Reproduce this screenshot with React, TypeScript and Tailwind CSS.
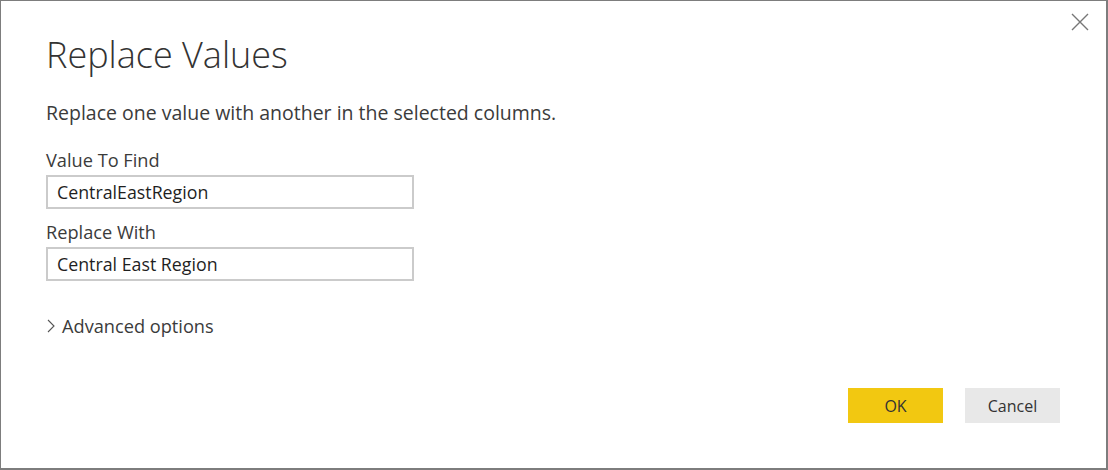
const Field = ({ label, value }: { label: string; value: string }) => {
  return (
    <div className="flex flex-col">
      <label className="text-[18.2px] leading-[24px] text-[#3b3b3b] mb-[3px]">{label}</label>
      <div className="w-[368px] h-[34px] border-2 border-[#cbcbcb] bg-white flex items-center px-[9px] text-[17.8px] text-[#1f1f1f]">
        {value}
      </div>
    </div>
  );
};

const App = () => {
  return (
    <div
      className="w-[1108px] h-[470px] bg-white border-t border-l border-r-2 border-b-2 border-[#7d7d7d] relative flex flex-col"
      style={{ fontFamily: '"Open Sans", "Noto Sans", sans-serif' }}
    >
      <button className="absolute top-[12px] right-[17px] w-[18px] h-[18px] text-[#777]">
        <svg viewBox="0 0 18 18" width="18" height="18" fill="none" stroke="currentColor" strokeWidth="1.4">
          <path d="M1 1 L17 17 M17 1 L1 17" />
        </svg>
      </button>
      <div className="pl-[45px] pt-[30px] flex flex-col">
        <h1 className="text-[36px] font-light leading-[48px] text-[#333]">Replace Values</h1>
        <p className="mt-[21px] text-[19.5px] leading-[26px] text-[#3b3b3b]">
          Replace one value with another in the selected columns.
        </p>
        <div className="mt-[22px] flex flex-col gap-[11px]">
          <Field label="Value To Find" value="CentralEastRegion" />
          <Field label="Replace With" value="Central East Region" />
        </div>
        <div className="mt-[33px] flex items-center gap-[7px] text-[18.2px] leading-[24px] text-[#3b3b3b]">
          <svg width="8" height="14" viewBox="0 0 8 14" fill="none" stroke="#555" strokeWidth="1.1" className="ml-[1px]">
            <path d="M1 1 L7 7 L1 13" />
          </svg>
          <span>Advanced options</span>
        </div>
      </div>
      <div className="mt-auto mb-[45px] flex justify-end gap-[22px] pr-[46px]">
        <button className="w-[95px] h-[35px] bg-[#f2c811] text-[16px] text-[#333]">OK</button>
        <button className="w-[95px] h-[35px] bg-[#e8e8e8] text-[16px] text-[#333]">Cancel</button>
      </div>
    </div>
  );
};

export default App;
